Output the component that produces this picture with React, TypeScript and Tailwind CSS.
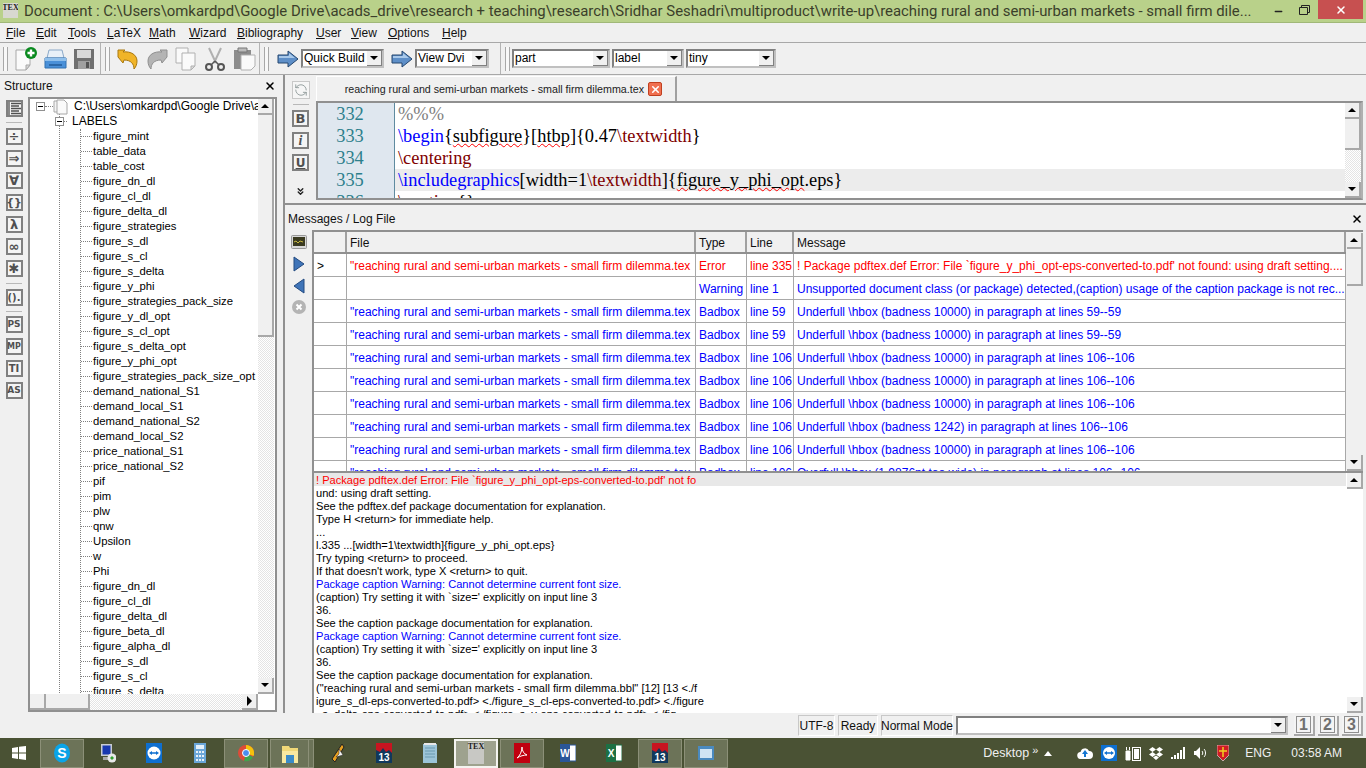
import React from 'react';
import { X, Minus, RefreshCcw, ChevronsDown } from 'lucide-react';

const labels = ['figure_mint','table_data','table_cost','figure_dn_dl','figure_cl_dl','figure_delta_dl','figure_strategies','figure_s_dl','figure_s_cl','figure_s_delta','figure_y_phi','figure_strategies_pack_size','figure_y_dl_opt','figure_s_cl_opt','figure_s_delta_opt','figure_y_phi_opt','figure_strategies_pack_size_opt','demand_national_S1','demand_local_S1','demand_national_S2','demand_local_S2','price_national_S1','price_national_S2','pif','pim','plw','qnw','Upsilon','w','Phi','figure_dn_dl','figure_cl_dl','figure_delta_dl','figure_beta_dl','figure_alpha_dl','figure_s_dl','figure_s_cl','figure_s_delta'];

const texFile = '"reaching rural and semi-urban markets - small firm dilemma.tex';
const under = (a: string | number, b: string | number) => `Underfull \\hbox (badness ${a}) in paragraph at lines ${b}--${b}`;
const rows = [
  { mark: '>', file: texFile, type: 'Error', line: 'line 335', msg: "! Package pdftex.def Error: File `figure_y_phi_opt-eps-converted-to.pdf' not found: using draft setting....", red: true },
  { mark: '', file: '', type: 'Warning', line: 'line 1', msg: 'Unsupported document class (or package) detected,(caption) usage of the caption package is not rec...' },
  { mark: '', file: texFile, type: 'Badbox', line: 'line 59', msg: under(10000, 59) },
  { mark: '', file: texFile, type: 'Badbox', line: 'line 59', msg: under(10000, 59) },
  { mark: '', file: texFile, type: 'Badbox', line: 'line 106', msg: under(10000, 106) },
  { mark: '', file: texFile, type: 'Badbox', line: 'line 106', msg: under(10000, 106) },
  { mark: '', file: texFile, type: 'Badbox', line: 'line 106', msg: under(10000, 106) },
  { mark: '', file: texFile, type: 'Badbox', line: 'line 106', msg: under(1242, 106) },
  { mark: '', file: texFile, type: 'Badbox', line: 'line 106', msg: under(10000, 106) },
  { mark: '', file: texFile, type: 'Badbox', line: 'line 106', msg: 'Overfull \\hbox (1.9876pt too wide) in paragraph at lines 106--106' },
];

const logLines: [string, string?][] = [
  ['und: using draft setting.'],
  ['See the pdftex.def package documentation for explanation.'],
  ['Type H <return> for immediate help.'],
  ['...'],
  ['l.335 ...[width=1\\textwidth]{figure_y_phi_opt.eps}'],
  ['Try typing <return> to proceed.'],
  ["If that doesn't work, type X <return> to quit."],
  ['Package caption Warning: Cannot determine current font size.', 'blue'],
  ["(caption) Try setting it with `size=' explicitly on input line 3"],
  ['36.'],
  ['See the caption package documentation for explanation.'],
  ['Package caption Warning: Cannot determine current font size.', 'blue'],
  ["(caption) Try setting it with `size=' explicitly on input line 3"],
  ['36.'],
  ['See the caption package documentation for explanation.'],
  ['("reaching rural and semi-urban markets - small firm dilemma.bbl" [12] [13 <./f'],
  ['igure_s_dl-eps-converted-to.pdf> <./figure_s_cl-eps-converted-to.pdf> <./figure'],
  ['_s_delta-eps-converted-to.pdf> <./figure_s_y-eps-converted-to.pdf> <./fig'],
];

const dither = 'bg-[repeating-conic-gradient(#e4e4e4_0_25%,#ffffff_0_50%)] bg-[length:2px_2px]';

function Arrow({ dir }: { dir: 'up' | 'down' | 'right' }) {
  const pts = dir === 'up' ? '1,6 9,6 5,2' : dir === 'down' ? '1,2 9,2 5,6' : '3,0 8,5 3,10';
  return (
    <svg width="10" height={dir === 'right' ? 10 : 8} viewBox={dir === 'right' ? '0 0 10 10' : '0 0 10 8'}>
      <polygon points={pts} fill="#000" />
    </svg>
  );
}

function ScrollBtn({ dir }: { dir: 'up' | 'down' | 'right' }) {
  return (
    <div className="flex h-[16px] w-[16px] shrink-0 items-center justify-center border-r-2 border-b-2 border-[#a8a8a8] bg-[#f0f0f0]">
      <Arrow dir={dir} />
    </div>
  );
}

function VScroll({ thumb, track = true }: { thumb: number; track?: boolean }) {
  return (
    <div className="flex w-[16px] shrink-0 flex-col">
      <ScrollBtn dir="up" />
      {thumb > 0 && <div style={{ height: thumb }} className="shrink-0 border-r-2 border-b-2 border-[#a8a8a8] bg-[#f0f0f0]" />}
      <div className={`flex-1 ${track ? dither : ''}`} />
      <ScrollBtn dir="down" />
    </div>
  );
}

function Combo({ text, w }: { text: string; w: string }) {
  return (
    <div className={`flex h-[19px] shrink-0 items-center border-2 border-[#808080] border-r-[#c0c0c0] border-b-[#c0c0c0] bg-white ${w}`}>
      <span className="flex-1 truncate pl-[1px] text-[12px] leading-[15px] text-black">{text}</span>
      <div className="flex h-[15px] w-[15px] shrink-0 items-center justify-center border-r border-b border-[#808080] bg-[#f0f0f0]">
        <Arrow dir="down" />
      </div>
    </div>
  );
}

function Handle({ ml = 'ml-[3px]' }: { ml?: string }) {
  return <div className={`h-[24px] w-[5px] shrink-0 border-x border-[#a8a8a8] bg-[#f8f8f8] ${ml}`} />;
}

function ToolSep({ ml }: { ml: string }) {
  return <div className={`h-[31px] w-[1px] shrink-0 bg-[#b4b4b4] ${ml}`} />;
}

function NewDoc() {
  return (
    <svg width="24" height="24" viewBox="0 0 24 24" className="ml-[7px] shrink-0">
      <path d="M1 3h14v15l-4 5H1z" fill="#fafafa" stroke="#a8a8a8" />
      <path d="M15 18h-4v5z" fill="#d8d8d8" stroke="#a8a8a8" />
      <circle cx="16" cy="6" r="6" fill="#0a8a1f" />
      <path d="M16 2.500v7M12.500 6h7" stroke="#fff" strokeWidth="2.400" />
    </svg>
  );
}

function Printer() {
  return (
    <svg width="24" height="24" viewBox="0 0 24 24" className="ml-[5px] shrink-0">
      <path d="M5 3h13l2 8H3z" fill="#e8f0f8" stroke="#8aa8c8" />
      <path d="M1 11h21v10H1z" fill="#4a90d8" stroke="#3070b0" />
      <path d="M1 11h21v3H1z" fill="#90c0ec" />
      <path d="M5 17h13v2H5z" fill="#2c68a8" />
    </svg>
  );
}

function Floppy() {
  return (
    <svg width="22" height="22" viewBox="0 0 22 22" className="ml-[5px] shrink-0">
      <path d="M1 1h20v20H1z" fill="#707070" />
      <path d="M4 2h14v8H4z" fill="#d8d8d8" />
      <path d="M5 13h12v8H5z" fill="#a0a0a0" />
      <path d="M13 14h3v6h-3z" fill="#555" />
    </svg>
  );
}

function Swirl({ color, edge, flip, ml }: { color: string; edge: string; flip?: boolean; ml: string }) {
  return (
    <svg width="24" height="22" viewBox="0 0 24 22" className={`${ml} shrink-0`} style={flip ? { transform: 'scaleX(-1)' } : undefined}>
      <path d="M2 2l7 0-2 2c8-1 14 3 14 9 0 3-1 6-3 8 0-5-3-9-10-9l-1 3-5-6z" fill={color} stroke={edge} strokeWidth="1" />
    </svg>
  );
}

function CopyIcon() {
  return (
    <svg width="22" height="24" viewBox="0 0 22 24" className="ml-[6px] shrink-0">
      <path d="M1 1h12v15H1z" fill="#fafafa" stroke="#b0b0b0" />
      <path d="M7 6h13v13l-4 4H7z" fill="#fafafa" stroke="#b0b0b0" />
      <path d="M20 19h-4v4z" fill="#ddd" stroke="#b0b0b0" />
    </svg>
  );
}

function Scissors() {
  return (
    <svg width="24" height="24" viewBox="0 0 24 24" className="ml-[6px] shrink-0">
      <path d="M6 1l7 15M18 1l-7 15" stroke="#b0b0b0" strokeWidth="2" fill="none" />
      <circle cx="6" cy="20" r="3" fill="none" stroke="#555" strokeWidth="2" />
      <circle cx="18" cy="20" r="3" fill="none" stroke="#555" strokeWidth="2" />
      <path d="M8 18l4-4M16 18l-4-4" stroke="#555" strokeWidth="1.500" />
    </svg>
  );
}

function Paste() {
  return (
    <svg width="24" height="24" viewBox="0 0 24 24" className="ml-[6px] shrink-0">
      <path d="M1 3h17v19H1z" fill="#8c8c8c" />
      <path d="M5 1h9v4H5z" fill="#bbb" stroke="#777" />
      <path d="M8 8h14v11l-4 4H8z" fill="#fafafa" stroke="#b0b0b0" />
    </svg>
  );
}

function BlueArrow({ ml }: { ml: string }) {
  return (
    <svg width="22" height="18" viewBox="0 0 22 18" className={`${ml} shrink-0`}>
      <path d="M1 5h10V1l10 8-10 8v-4H1z" fill="#5e8fc8" stroke="#24476f" />
      <path d="M2 6h10V3l6 5H2z" fill="#a9c9ea" />
    </svg>
  );
}

function SideBtn({ children, mt = 'mt-[5px]' }: { children: React.ReactNode; mt?: string }) {
  return (
    <div className={`flex h-[17px] w-[17px] shrink-0 items-center justify-center border-2 border-[#808080] bg-[#f4f4f4] text-[13px] leading-none font-bold text-[#505050] ${mt}`} style={{ fontFamily: '"DejaVu Sans", sans-serif' }}>
      {children}
    </div>
  );
}

function SideLine({ mt, mb }: { mt: string; mb: string }) {
  return <div className={`h-[1px] w-[16px] shrink-0 bg-[#b8b8b8] ${mt} ${mb}`} />;
}

function StructureBar() {
  return (
    <div className="flex w-[28px] shrink-0 flex-col items-center pt-[3px]">
      <SideBtn mt="mt-0">
        <svg width="13" height="13" viewBox="0 0 13 13"><path d="M1 0v13M3 1.500h10M3 6.500h10M3 11.500h10M3 4h8M3 9h8" stroke="#505050" strokeWidth="1.300" /></svg>
      </SideBtn>
      <SideLine mt="mt-[5px]" mb="mb-[5px]" />
      <SideBtn mt="mt-0">÷</SideBtn>
      <SideBtn>⇒</SideBtn>
      <SideBtn>∀</SideBtn>
      <SideBtn><span className="text-[11px]">{'{}'}</span></SideBtn>
      <SideBtn>λ</SideBtn>
      <SideBtn>∞</SideBtn>
      <SideBtn>✱</SideBtn>
      <SideLine mt="mt-[6px]" mb="mb-[5px]" />
      <SideBtn mt="mt-0"><span className="text-[10px]">().</span></SideBtn>
      <SideLine mt="mt-[5px]" mb="mb-[4px]" />
      <SideBtn mt="mt-0"><span className="text-[9px]">PS</span></SideBtn>
      <SideBtn><span className="text-[8px]">MP</span></SideBtn>
      <SideBtn><span className="text-[10px]">TI</span></SideBtn>
      <SideBtn><span className="text-[9px]">AS</span></SideBtn>
    </div>
  );
}

function Box() {
  return (
    <div className="flex h-[9px] w-[9px] shrink-0 items-center justify-center border border-[#909090] bg-white">
      <div className="h-[1px] w-[5px] bg-black" />
    </div>
  );
}

function Tree() {
  return (
    <div className="min-w-0 flex-1 overflow-hidden pl-[6px] text-[11.3px] leading-[15px] text-black">
      <div className="flex h-[15px] items-center whitespace-nowrap">
        <Box />
        <div className="w-[8px] shrink-0 border-t border-dotted border-[#808080]" />
        <svg width="16" height="16" viewBox="0 0 16 16" className="shrink-0"><path d="M1 2h8v11H1z" fill="#f4f4f4" stroke="#a8a8a8" /><path d="M4 1h7l3 3v11H4z" fill="#fafafa" stroke="#a8a8a8" /></svg>
        <span className="ml-[5px] text-[12px]">C:\Users\omkardpd\Google Drive\a</span>
      </div>
      <div className="ml-[23px] border-l border-dotted border-[#808080]">
        <div className="flex h-[15px] items-center">
          <div className="-ml-[5px]"><Box /></div>
          <div className="w-[3px] shrink-0 border-t border-dotted border-[#808080]" />
          <span className="ml-[5px] text-[12px]">LABELS</span>
        </div>
        <div className="ml-[20px] border-l border-dotted border-[#808080]">
          {labels.map((l, i) => (
            <div key={i} className="flex h-[15px] items-center whitespace-nowrap">
              <div className="w-[11px] shrink-0 border-t border-dotted border-[#808080]" />
              <span className="ml-[1px]">{l}</span>
            </div>
          ))}
        </div>
      </div>
    </div>
  );
}

function StructurePanel() {
  return (
    <div className="flex w-[283px] shrink-0 flex-col">
      <div className="flex h-[22px] shrink-0 items-center pl-[4px] pr-[6px] text-[12px] text-[#111]">
        <span className="flex-1">Structure</span>
        <X size={12} strokeWidth={3} className="mr-[1px] text-black" />
      </div>
      <div className="flex min-h-0 flex-1">
        <StructureBar />
        <div className="mb-[1px] flex w-[249px] shrink-0 flex-col border-2 border-[#909090] bg-white">
          <div className="flex min-h-0 flex-1 pr-[1px]">
            <Tree />
            <VScroll thumb={222} />
          </div>
          <div className="flex h-[16px] shrink-0 pr-[17px]">
            <div className="w-[16px] shrink-0 border-r-2 border-b-2 border-[#a8a8a8] bg-[#f0f0f0]" />
            <div className="w-[44px] shrink-0 border-r-2 border-b-2 border-[#a8a8a8] bg-[#f0f0f0]" />
            <div className={`flex-1 ${dither}`} />
            <ScrollBtn dir="right" />
          </div>
        </div>
      </div>
    </div>
  );
}

function Wavy({ children }: { children: React.ReactNode }) {
  return <span className="underline decoration-[#ff0000] decoration-wavy decoration-1 underline-offset-1">{children}</span>;
}

function CodeLine({ n, active, children }: { n: number; active?: boolean; children: React.ReactNode }) {
  return (
    <div className="flex h-[22px] shrink-0 text-[18.4px] leading-[22px]">
      <div className="w-[77px] shrink-0 border-r border-[#5f8ba0] bg-[#dfe7ef] pr-[12px] text-center text-[#2d7f8c]">{n}</div>
      <div className={`flex-1 whitespace-pre pl-[3px] ${active ? 'bg-[#ececec]' : ''}`}>{children}</div>
    </div>
  );
}

function Editor() {
  const blue = 'text-[#0000ff]';
  const dark = 'text-[#800000]';
  return (
    <div className="flex h-[130px] shrink-0 border-b-2 border-[#909090]">
      <div className="flex w-[31px] shrink-0 flex-col items-center pt-[6px]">
        <div className="flex h-[18px] w-[18px] shrink-0 items-center justify-center border border-[#c8c8c8] bg-[#f6f6f6]">
          <RefreshCcw size={14} strokeWidth={1.500} className="text-[#8a9696]" />
        </div>
        <div className="mt-[5px] mb-[5px] h-[1px] w-[16px] shrink-0 bg-[#b8b8b8]" />
        <SideBtn mt="mt-0"><span className="text-[13px]">B</span></SideBtn>
        <SideBtn><span className="text-[14px] italic" style={{ fontFamily: '"Liberation Serif", serif' }}>i</span></SideBtn>
        <SideBtn><span className="text-[12px] underline">U</span></SideBtn>
        <ChevronsDown size={11} strokeWidth={3} className="mt-[15px] shrink-0 text-[#222]" />
      </div>
      <div className="flex min-w-0 flex-1 flex-col pr-[3px]">
        <div className="flex h-[26px] shrink-0 items-end">
          <div className="flex h-[25px] w-[361px] items-center justify-end border-t border-l border-white border-r-2 border-r-[#a0a0a0] pr-[13px] text-[10.7px] text-[#222]">
            <span className="whitespace-nowrap">reaching rural and semi-urban markets - small firm dilemma.tex</span>
            <span className="ml-[4px] flex h-[14px] w-[14px] shrink-0 items-center justify-center rounded-[2px] border border-[#c04020] bg-[#f07050]">
              <X size={11} strokeWidth={3.500} className="text-white" />
            </span>
          </div>
        </div>
        <div className="flex h-[99px] shrink-0 border-2 border-[#909090] border-r-[#b0b0b0] bg-white">
          <div className="min-w-0 flex-1 overflow-hidden text-black" style={{ fontFamily: '"Liberation Serif", serif' }}>
            <CodeLine n={332}><span className="text-[#808080]">%%%</span></CodeLine>
            <CodeLine n={333}>
              <span className={blue}>\begin</span>{'{'}<Wavy>subfigure</Wavy>{'}'}[<Wavy>htbp</Wavy>]{'{0.47'}<span className={dark}>\textwidth</span>{'}'}
            </CodeLine>
            <CodeLine n={334}><span className={dark}>\centering</span></CodeLine>
            <CodeLine n={335} active>
              <span className={blue}>\includegraphics</span>[width=1<span className={dark}>\textwidth</span>]{'{'}<Wavy>figure_y_phi_opt</Wavy>.eps{'}'}
            </CodeLine>
            <CodeLine n={336}><span className={dark}>\caption</span>{'{}'}</CodeLine>
          </div>
          <VScroll thumb={31} />
        </div>
      </div>
    </div>
  );
}

function Cell({ children, className = '' }: { children?: React.ReactNode; className?: string }) {
  return <div className={`truncate border-r border-[#a8a8a8] pl-[3px] leading-[24px] ${className}`}>{children}</div>;
}

const cols = 'grid grid-cols-[33px_349px_51px_47px_1fr]';

function MessageTable() {
  return (
    <div className="flex h-[241px] shrink-0 border-t-2 border-l-2 border-[#909090]">
      <div className="flex min-w-0 flex-1 flex-col overflow-hidden bg-white text-[12px]">
        <div className={`${cols} h-[22px] shrink-0 border-b-2 border-[#909090] bg-[#f0f0f0] text-[#111]`}>
          {['', 'File', 'Type', 'Line', 'Message'].map((h) => (
            <div key={h} className="truncate border-r-2 border-[#a0a0a0] pl-[3px] leading-[22px]">{h}</div>
          ))}
        </div>
        {rows.map((r, i) => (
          <div key={i} className={`${cols} h-[23px] shrink-0 border-b border-[#a8a8a8] ${r.red ? 'text-[#ff0000]' : 'text-[#0000ff]'}`}>
            <Cell className="text-black">{r.mark}</Cell>
            <Cell>{r.file}</Cell>
            <Cell>{r.type}</Cell>
            <Cell>{r.line}</Cell>
            <Cell>{r.msg}</Cell>
          </div>
        ))}
      </div>
      <div className="ml-[1px] flex pt-[1px]">
        <VScroll thumb={37} track={false} />
      </div>
    </div>
  );
}

function LogView() {
  return (
    <div className="flex min-h-0 flex-1 border-t-2 border-l-2 border-[#909090] bg-white">
      <div className="min-w-0 flex-1 overflow-hidden text-[11.1px] leading-[15px] whitespace-pre text-black">
        <div className="h-[13px] bg-[#e8e8e8] pl-[2px] text-[#ff0000]">! Package pdftex.def Error: File `figure_y_phi_opt-eps-converted-to.pdf' not fo</div>
        {logLines.map(([t, c], i) => (
          <div key={i} className={`h-[13px] pl-[2px] ${c ? 'text-[#0000ff]' : ''}`}>{t}</div>
        ))}
      </div>
      <div className="ml-[1px] flex">
        <VScroll thumb={0} track={false} />
      </div>
    </div>
  );
}

function Messages() {
  return (
    <div className="flex min-h-0 flex-1 flex-col">
      <div className="flex h-[25px] shrink-0 items-center pt-[2px] pr-[2px] pl-[3px] text-[12px] text-[#111]">
        <span className="flex-1">Messages / Log File</span>
        <X size={12} strokeWidth={3} className="mr-[1px] text-black" />
      </div>
      <div className="flex min-h-0 flex-1">
        <div className="flex w-[27px] shrink-0 flex-col items-center pt-[5px]">
          <svg width="16" height="14" viewBox="0 0 16 14"><rect x="0.500" y="0.500" width="15" height="13" rx="1" fill="#d8d8d8" stroke="#999" /><rect x="2" y="2" width="12" height="9" fill="#3a3a20" /><path d="M3 7l2-1 2 2 2-2 3 1" stroke="#c8b840" fill="none" /></svg>
          <svg width="14" height="16" viewBox="0 0 14 16" className="mt-[7px]"><path d="M2 1l10 7-10 7z" fill="#3f74b8" stroke="#234a80" /></svg>
          <svg width="14" height="16" viewBox="0 0 14 16" className="mt-[6px]"><path d="M12 1L2 8l10 7z" fill="#3f74b8" stroke="#234a80" /></svg>
          <svg width="14" height="14" viewBox="0 0 14 14" className="mt-[6px]"><circle cx="7" cy="7" r="7" fill="#b4b4b4" /><path d="M4.500 4.500l5 5M9.500 4.500l-5 5" stroke="#fff" strokeWidth="2" /></svg>
        </div>
        <div className="flex min-w-0 flex-1 flex-col pr-[3px]">
          <MessageTable />
          <LogView />
        </div>
      </div>
    </div>
  );
}

function StatusCell({ children, w }: { children: React.ReactNode; w: string }) {
  return <div className={`flex h-[21px] shrink-0 items-center justify-center border border-t-[#c8c8c8] border-l-[#c8c8c8] border-r-white border-b-white text-[12px] whitespace-nowrap text-[#111] ${w}`}>{children}</div>;
}

function PageBtn({ n }: { n: number }) {
  return (
    <div className="flex h-[20px] w-[21px] shrink-0 items-center justify-center border-r-2 border-b-2 border-[#a8a8a8] bg-[#f4f4f4]">
      <span className="flex h-[17px] w-[15px] items-center justify-center border border-[#909090] text-[16px] leading-none font-bold text-[#707070]">{n}</span>
    </div>
  );
}

function Slot({ on, active, children }: { on?: boolean; active?: boolean; children: React.ReactNode }) {
  const cls = active
    ? 'border-2 border-[#f4f4f0] bg-[#9ea28e]'
    : on
      ? 'border border-[#8c9078] bg-[#6c7358]'
      : '';
  return <div className={`mx-[1px] flex h-[29px] w-[44px] shrink-0 items-center justify-center ${cls}`}>{children}</div>;
}

function Matlab() {
  return (
    <svg width="16" height="20" viewBox="0 0 16 20">
      <rect width="16" height="20" fill="#10385c" />
      <path d="M0 0h16v10l-3-3-3 2-3-4-3 4-4-2z" fill="#c81420" />
      <text x="8" y="18" textAnchor="middle" fontSize="10" fontWeight="700" fill="#fff" fontFamily="Liberation Sans, sans-serif">13</text>
    </svg>
  );
}

function TaskIcons() {
  return (
    <>
      <Slot on>
        <svg width="16" height="20" viewBox="0 0 16 20"><ellipse cx="8" cy="10" rx="8" ry="9.500" fill="#0aa4e8" /><text x="8" y="15" textAnchor="middle" fontSize="14" fontWeight="700" fill="#fff" fontFamily="Liberation Sans, sans-serif">S</text></svg>
      </Slot>
      <Slot>
        <svg width="16" height="20" viewBox="0 0 16 20"><rect x="1" y="1" width="11" height="12" fill="#c8ccd4" /><rect x="2.500" y="2.500" width="8" height="9" fill="#1838b0" /><rect x="3" y="14" width="8" height="3" fill="#a8a8a8" /><circle cx="12" cy="15" r="4.500" fill="#e8e8e8" /><path d="M10 15l2-2 2 2-2 2z" fill="#30a030" /></svg>
      </Slot>
      <Slot>
        <svg width="16" height="20" viewBox="0 0 16 20"><rect y="0" width="16" height="20" fill="#0e6fd0" /><circle cx="8" cy="10" r="6.500" fill="#fff" /><path d="M3 10l3-2v1.200h4V8l3 2-3 2v-1.200H6V12z" fill="#0e6fd0" /></svg>
      </Slot>
      <Slot>
        <svg width="12" height="20" viewBox="0 0 12 20"><rect width="12" height="20" fill="#6aa6d8" /><rect x="2" y="2" width="8" height="4" fill="#e4f0fa" /><path d="M2 8h2v2H2zM5 8h2v2H5zM8 8h2v2H8zM2 12h2v2H2zM5 12h2v2H5zM8 12h2v2H8zM2 16h2v2H2zM5 16h2v2H5zM8 16h2v2H8z" fill="#e8f0f8" /></svg>
      </Slot>
      <Slot on>
        <svg width="16" height="20" viewBox="0 0 16 16"><circle cx="8" cy="8" r="8" fill="#dd4b39" /><path d="M8 8L15 12A8 8 0 0 1 6 16z" fill="#3fa34d" /><path d="M8 0a8 8 0 0 1 7.500 11L8 8z" fill="#f4c20d" /><circle cx="8" cy="8" r="3.500" fill="#4a8df0" stroke="#fff" /></svg>
      </Slot>
      <div className="mx-[1px] flex h-[29px] w-[44px] shrink-0 border border-[#8c9078] bg-[#6c7358]">
        <div className="flex w-[38px] items-center justify-center border-r border-[#8c9078]">
          <svg width="16" height="20" viewBox="0 0 16 20"><path d="M0 3h7l1 2h8v15H0z" fill="#f0d878" /><path d="M0 8h16v12H0z" fill="#f8e8a0" /><rect x="4" y="12" width="8" height="8" fill="#3a8ac8" /></svg>
        </div>
      </div>
      <Slot>
        <svg width="14" height="20" viewBox="0 0 14 20"><path d="M1 16L11 1l2 3-9 15z" fill="#e8a020" stroke="#222" /><path d="M8 6l4 6-7 2 3-3z" fill="#f4f4f4" stroke="#222" strokeWidth="0.500" /></svg>
      </Slot>
      <Slot><Matlab /></Slot>
      <Slot>
        <svg width="14" height="20" viewBox="0 0 14 20"><rect y="1" width="14" height="19" fill="#9cc4d8" /><path d="M2 5h10M2 8h10M2 11h10M2 14h10" stroke="#6a9ab0" /><path d="M1 0h12v2H1z" fill="#e8e8e8" /></svg>
      </Slot>
      <Slot active>
        <div className="flex h-[22px] w-[16px] flex-col items-center bg-[#c8c8c4] text-[8px] leading-[10px] font-bold text-[#222]" style={{ fontFamily: '"Liberation Serif", serif' }}>TEX</div>
      </Slot>
      <Slot on>
        <svg width="16" height="20" viewBox="0 0 16 20"><rect width="16" height="20" fill="#c00010" /><path d="M3 15c3-2 5-7 5-11 0 4 2 7 5 8-3 0-7 1-10 3z" fill="none" stroke="#fff" /></svg>
      </Slot>
      <Slot>
        <svg width="16" height="20" viewBox="0 0 16 20"><rect x="6" y="2" width="10" height="16" fill="#fff" stroke="#2a5699" /><rect y="1" width="10" height="18" fill="#2a5699" /><text x="5" y="14" textAnchor="middle" fontSize="10" fontWeight="700" fill="#fff" fontFamily="Liberation Sans, sans-serif">W</text></svg>
      </Slot>
      <Slot>
        <svg width="16" height="20" viewBox="0 0 16 20"><rect x="6" y="2" width="10" height="16" fill="#fff" stroke="#1d7044" /><rect y="1" width="10" height="18" fill="#1d7044" /><text x="5" y="14" textAnchor="middle" fontSize="10" fontWeight="700" fill="#fff" fontFamily="Liberation Sans, sans-serif">X</text></svg>
      </Slot>
      <Slot on><Matlab /></Slot>
      <Slot on>
        <svg width="16" height="16" viewBox="0 0 16 16"><rect y="1" width="16" height="14" fill="#4a8ac0" /><rect x="2" y="4" width="12" height="9" fill="#cfe4f4" /></svg>
      </Slot>
    </>
  );
}

function Tray() {
  return (
    <div className="flex items-center pr-[24px] text-[12px] text-[#f0f0f0]">
      <span className="text-[12.5px]">Desktop</span>
      <span className="mb-[6px] ml-[3px] text-[11px] leading-none">»</span>
      <svg width="8" height="5" viewBox="0 0 8 5" className="ml-[6px]"><path d="M0 5l4-5 4 5z" fill="#fff" /></svg>
      <svg width="16" height="12" viewBox="0 0 16 12" className="ml-[25px]"><path d="M4 12a3.500 3.500 0 0 1-.5-7A4.500 4.500 0 0 1 12 4a4 4 0 0 1 0 8z" fill="#fff" /><path d="M8 3l3 4H9v3H7V7H5z" fill="#1476d0" /></svg>
      <svg width="16" height="16" viewBox="0 0 16 16" className="ml-[8px]"><rect width="16" height="16" fill="#0e6fd0" /><circle cx="8" cy="8" r="6" fill="#fff" /><path d="M3 8l3-2v1.200h4V6l3 2-3 2V8.800H6V10z" fill="#0e6fd0" /></svg>
      <svg width="16" height="16" viewBox="0 0 16 16" className="ml-[8px]"><path d="M1 6h4v9H1zM1.500 2v3M4.500 2v3" stroke="#fff" fill="#fff" /><rect x="7.500" y="2.500" width="8" height="13" fill="none" stroke="#fff" /><rect x="9" y="4" width="5" height="10" fill="#fff" /></svg>
      <svg width="14" height="13" viewBox="0 0 14 13" className="ml-[8px]"><path d="M3.500 0L7 2.500 3.500 5 0 2.500zM10.500 0L14 2.500 10.500 5 7 2.500zM3.500 5L7 7.500 3.500 10 0 7.500zM10.500 5L14 7.500 10.500 10 7 7.500zM7 8.500l3 2-3 2.500-3-2.500z" fill="#fff" /></svg>
      <svg width="14" height="12" viewBox="0 0 14 12" className="ml-[8px]"><path d="M0 10h2v2H0zM3 8h2v4H3zM6 6h2v6H6zM9 3h2v9H9zM12 0h2v12h-2z" fill="#fff" /></svg>
      <svg width="14" height="14" viewBox="0 0 14 14" className="ml-[9px]"><path d="M0 5h2l4-4v12L2 9H0z" fill="#fff" /><path d="M8 5c1 1 1 3 0 4M10 3c2 2 2 6 0 8" stroke="#fff" fill="none" /></svg>
      <svg width="12" height="16" viewBox="0 0 12 16" className="ml-[9px]"><path d="M0 0h12v10l-6 6-6-6z" fill="#d01c24" stroke="#ddd" strokeWidth="0.700" /><path d="M6 2v10M2 6h8" stroke="#f0d020" strokeWidth="1.500" /></svg>
      <span className="ml-[16px]">ENG</span>
      <span className="ml-[20px]">03:58 AM</span>
    </div>
  );
}

export default function App() {
  return (
    <div className="flex h-[768px] w-[1366px] flex-col overflow-hidden bg-[#f0f0f0]" style={{ fontFamily: '"Liberation Sans", sans-serif' }}>
      <div className="flex h-[23px] shrink-0 border-b border-[#a0b878] bg-[#b9d18a]">
        <div className="ml-[3px] mt-[3px] flex h-[15px] w-[15px] shrink-0 items-start justify-center overflow-hidden bg-[#d8d8d0] text-[8px] leading-[10px] font-bold text-[#222]" style={{ fontFamily: '"Liberation Serif", serif' }}>TEX</div>
        <div className="ml-[6px] w-[1228px] shrink-0 truncate text-[14.9px] leading-[22px] text-[#3b3f2a]" style={{ fontFamily: 'Roboto, sans-serif' }}>
          Document : C:\Users\omkardpd\Google Drive\acads_drive\research + teaching\research\Sridhar Seshadri\multiproduct\write-up\reaching rural and semi-urban markets - small firm dile...
        </div>
        <div className="ml-[16px] flex w-[20px] shrink-0 items-center justify-center"><Minus size={11} strokeWidth={3} className="text-[#222]" /></div>
        <div className="ml-[6px] flex w-[20px] shrink-0 items-start justify-center pt-[5px]">
          <svg width="11" height="10" viewBox="0 0 11 10"><path d="M2.500 2.500V.500h8v7h-2M.500 2.500h8v7h-8z" fill="none" stroke="#222" /></svg>
        </div>
        <div className="ml-[4px] flex h-[19px] w-[45px] shrink-0 items-center justify-center bg-[#c75050]"><X size={12} strokeWidth={3} className="text-white" /></div>
      </div>

      <div className="flex h-[20px] shrink-0 items-center border-b border-[#a8a8a8] pl-[6px] text-[12px] text-[#111]">
        {[['F', 'ile', 'w-[30px]'], ['E', 'dit', 'w-[32px]'], ['T', 'ools', 'w-[39px]'], ['L', 'aTeX', 'w-[42px]'], ['M', 'ath', 'w-[40px]'], ['W', 'izard', 'w-[48px]'], ['B', 'ibliography', 'w-[79px]'], ['U', 'ser', 'w-[35px]'], ['V', 'iew', 'w-[37px]'], ['O', 'ptions', 'w-[54px]'], ['H', 'elp', 'w-[40px]']].map(([a, b, w]) => (
          <span key={a} className={w}><span className="underline">{a}</span>{b}</span>
        ))}
      </div>

      <div className="flex h-[32px] shrink-0 items-center border-b border-[#a8a8a8]">
        <Handle />
        <NewDoc />
        <Printer />
        <Floppy />
        <ToolSep ml="ml-[5px]" />
        <Handle ml="ml-[4px]" />
        <Swirl color="#f0b428" edge="#a87810" ml="ml-[6px]" />
        <Swirl color="#b4b4b4" edge="#909090" flip ml="ml-[5px]" />
        <CopyIcon />
        <Scissors />
        <Paste />
        <ToolSep ml="ml-[2px]" />
        <Handle ml="ml-[4px]" />
        <BlueArrow ml="ml-[8px]" />
        <Combo text="Quick Build" w="ml-[2px] w-[83px]" />
        <BlueArrow ml="ml-[7px]" />
        <Combo text="View Dvi" w="ml-[2px] w-[74px]" />
        <ToolSep ml="ml-[11px]" />
        <Handle ml="ml-[4px]" />
        <Combo text="part" w="ml-[2px] w-[98px]" />
        <Combo text="label" w="ml-[2px] w-[72px]" />
        <Combo text="tiny" w="ml-[2px] w-[90px]" />
      </div>

      <div className="flex min-h-0 flex-1">
        <StructurePanel />
        <div className="flex min-w-0 flex-1 flex-col border-l-2 border-[#909090]">
          <Editor />
          <Messages />
        </div>
      </div>

      <div className="flex h-[25px] shrink-0 items-center justify-end gap-[3px] pr-[3px]">
        <StatusCell w="w-[37px]">UTF-8</StatusCell>
        <StatusCell w="w-[40px]">Ready</StatusCell>
        <StatusCell w="w-[72px]">Normal Mode</StatusCell>
        <Combo text="" w="mr-[3px] w-[332px]" />
        <PageBtn n={1} />
        <PageBtn n={2} />
        <PageBtn n={3} />
      </div>

      <div className="flex h-[30px] shrink-0 items-center justify-between bg-[#4a5234]">
        <div className="flex items-center">
          <svg width="14" height="14" viewBox="0 0 14 14" className="ml-[12px] mr-[13px] shrink-0"><path d="M0 2l6-1v5.500H0zM7 .8L14 0v6.500H7zM0 7.500h6V13l-6-1zM7 7.500h7V14l-7-1z" fill="#fff" /></svg>
          <TaskIcons />
        </div>
        <Tray />
      </div>
    </div>
  );
}
